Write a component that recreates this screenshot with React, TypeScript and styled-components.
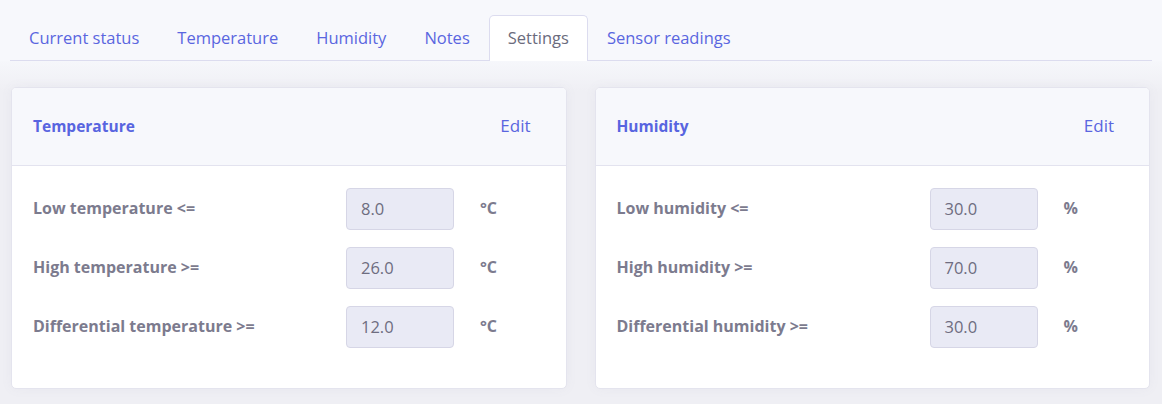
import React from "react";
import styled, { createGlobalStyle } from "styled-components";

const Global = createGlobalStyle`
  html, body { margin: 0; padding: 0; }
  body {
    background: #f7f8fc;
    font-family: "Open Sans", "Lato", sans-serif;
    width: 1162px;
    height: 404px;
    overflow: hidden;
  }
`;

const Page = styled.div`
  padding: 15px 10px 0 10px;
  display: flex;
  flex-direction: column;
`;

const TabBar = styled.div`
  display: flex;
  border-bottom: 1px solid #dcdcef;
  height: 45px;
`;

const Tab = styled.div<{ $active?: boolean }>`
  padding: 0 18px 2px 18px;
  display: flex;
  align-items: center;
  font-size: 16.5px;
  color: ${(p) => (p.$active ? "#6b6b7d" : "#5a66e0")};
  background: ${(p) => (p.$active ? "#ffffff" : "transparent")};
  border: 1px solid ${(p) => (p.$active ? "#dcdcef" : "transparent")};
  border-bottom: none;
  border-radius: 5px 5px 0 0;
  margin-bottom: -1px;
  height: 46px;
  box-sizing: border-box;
`;

const Content = styled.div`
  display: grid;
  grid-template-columns: 1fr 1fr;
  gap: 28px;
  padding: 26px 12px 16px 11px;
  margin: 0 -10px;
  background: linear-gradient(#f6f7fb, #efeff4 30px, #efeff4);
`;

const Card = styled.div`
  background: #fff;
  border: 1px solid #e4e4ee;
  border-radius: 5px;
  box-shadow: 0 0 12px rgba(120, 120, 150, 0.06);
  overflow: hidden;
`;

const CardHeader = styled.div`
  display: flex;
  justify-content: space-between;
  align-items: center;
  height: 77px;
  padding: 0 35px 0 21px;
  background: #f7f8fc;
  border-bottom: 1px solid #e3e3ef;
`;

const CardTitle = styled.div`
  font-weight: 700;
  font-size: 15.5px;
  color: #5865e0;
  padding-bottom: 2px;
`;

const EditLink = styled.div`
  font-size: 17px;
  color: #5a66e0;
  padding-bottom: 2px;
`;

const CardBody = styled.div`
  padding: 22px 0 40px 21px;
  display: flex;
  flex-direction: column;
  gap: 17px;
`;

const Row = styled.div`
  display: grid;
  grid-template-columns: 313px 108px auto;
  align-items: center;
`;

const Label = styled.div`
  font-weight: 700;
  font-size: 16px;
  color: #7c7b8e;
  padding-bottom: 3px;
`;

const ValueBox = styled.div`
  height: 42px;
  box-sizing: border-box;
  border: 1px solid #d6d6e6;
  border-radius: 4px;
  background: #e9eaf5;
  display: flex;
  align-items: center;
  padding: 0 0 1px 14px;
  font-size: 16.5px;
  color: #6e6d80;
`;

const Unit = styled.div`
  padding-left: 26px;
  padding-bottom: 3px;
  font-weight: 700;
  font-size: 16px;
  color: #7c7b8e;
`;

const tabs = ["Current status", "Temperature", "Humidity", "Notes", "Settings", "Sensor readings"];

type Setting = { label: string; value: string };

const SettingsCard = ({ title, unit, rows }: { title: string; unit: string; rows: Setting[] }) => (
  <Card>
    <CardHeader>
      <CardTitle>{title}</CardTitle>
      <EditLink>Edit</EditLink>
    </CardHeader>
    <CardBody>
      {rows.map((r) => (
        <Row key={r.label}>
          <Label>{r.label}</Label>
          <ValueBox>{r.value}</ValueBox>
          <Unit>{unit}</Unit>
        </Row>
      ))}
    </CardBody>
  </Card>
);

export default function App() {
  return (
    <>
      <Global />
      <Page>
        <TabBar>
          {tabs.map((t) => (
            <Tab key={t} $active={t === "Settings"}>
              {t}
            </Tab>
          ))}
        </TabBar>
        <Content>
          <SettingsCard
            title="Temperature"
            unit="°C"
            rows={[
              { label: "Low temperature <=", value: "8.0" },
              { label: "High temperature >=", value: "26.0" },
              { label: "Differential temperature >=", value: "12.0" },
            ]}
          />
          <SettingsCard
            title="Humidity"
            unit="%"
            rows={[
              { label: "Low humidity <=", value: "30.0" },
              { label: "High humidity >=", value: "70.0" },
              { label: "Differential humidity >=", value: "30.0" },
            ]}
          />
        </Content>
      </Page>
    </>
  );
}
